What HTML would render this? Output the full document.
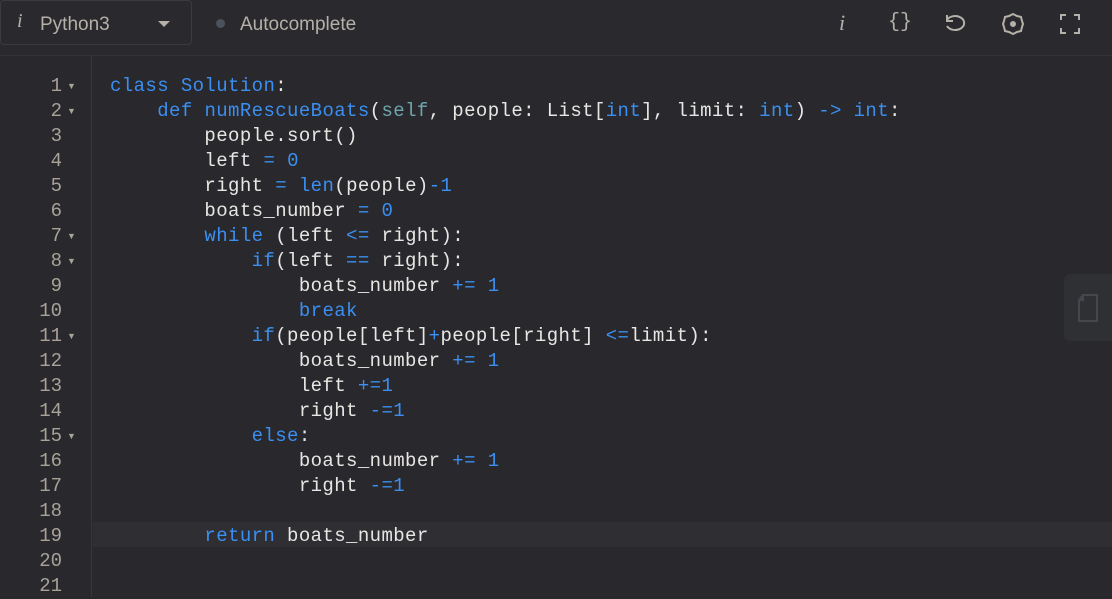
<!DOCTYPE html>
<html><head><style>
body{margin:0;width:1112px;height:597px;background:#28282d;overflow:hidden;font-family:"Liberation Sans",sans-serif;position:relative}
.hdr{position:absolute;left:0;top:0;width:1112px;height:55px;border-bottom:1px solid #323237;background:#29292e}
.sel{position:absolute;left:0;top:0;width:192px;height:45px;border:1px solid #3a3a3f;border-radius:4px;box-sizing:border-box}
.t{position:absolute;color:#b5b0a8;font-size:19px}
.gut{position:absolute;left:0;top:56px;width:91px;height:541px;border-right:1px solid #36363b}
.ln{position:absolute;left:0;width:62px;text-align:right;font-family:"Liberation Mono",monospace;font-size:19px;color:#a8a298;line-height:25px}
.ar{position:absolute;left:67px;font-size:9px;color:#a8a298;line-height:25px}
.code{position:absolute;left:110px;top:74px;font-family:"Liberation Mono",monospace;font-size:19px;letter-spacing:0.4px;line-height:25px;color:#e8e6e3;white-space:pre}
.k{color:#3b8ff0}.s{color:#6fa5ac}
.cur{position:absolute;left:93px;top:522px;width:1019px;height:25px;background:#2e2e33}
</style></head><body>
<div class="hdr">
<div class="sel"></div>
<div class="t" style="left:17px;top:10px;font-family:'Liberation Serif',serif;font-style:italic;font-size:20px">i</div>
<div class="t" style="left:40px;top:14px">Python3</div>
<div style="position:absolute;left:158px;top:21px;border-left:6px solid transparent;border-right:6px solid transparent;border-top:6px solid #b5b0a8"></div>
<div style="position:absolute;left:216px;top:19px;width:9px;height:9px;border-radius:50%;background:#4a525a"></div>
<div class="t" style="left:240px;top:14px">Autocomplete</div>
<div class="t" style="left:839px;top:10px;font-family:'Liberation Serif',serif;font-style:italic;font-size:22px">i</div>
<div class="t" style="left:888px;top:11px;font-family:'Liberation Mono',monospace;font-size:20px">{}</div>
<svg style="position:absolute;left:943px;top:12px" width="26" height="24" viewBox="0 0 26 24" fill="none" stroke="#b5b0a8" stroke-width="2"><path d="M4 8a9 7 0 1 1 0 6"/><path d="M4 9h9" stroke-width="0"/><path d="M4 3v6h6"/></svg>
<svg style="position:absolute;left:1000px;top:11px" width="26" height="26" viewBox="0 0 26 26" fill="none" stroke="#b5b0a8" stroke-width="2"><path d="M13 3l4 2 4 1 1 4 1 3-1 3-1 4-4 1-4 2-4-2-4-1-1-4-1-3 1-3 1-4 4-1z"/><circle cx="13" cy="13" r="2" fill="#b5b0a8"/></svg>
<svg style="position:absolute;left:1060px;top:14px" width="20" height="20" viewBox="0 0 20 20" fill="none" stroke="#b5b0a8" stroke-width="2"><path d="M1 6V1h5M14 1h5v5M19 14v5h-5M6 19H1v-5"/></svg>
</div>
<div class="gut"></div>
<div class="cur"></div>
<div style="position:absolute;left:1064px;top:274px;width:48px;height:67px;background:#2f3034;border-radius:6px 0 0 6px"></div>
<svg style="position:absolute;left:1077px;top:293px" width="24" height="30" viewBox="0 0 24 30" fill="none" stroke="#46474c" stroke-width="2"><path d="M6 2h14v26H2V7z"/><path d="M2 7h4V2" fill="#46474c"/></svg>
<div id="g"></div>
<div class="code"><span class="k">class</span> <span class="k">Solution</span>:
    <span class="k">def</span> <span class="k">numRescueBoats</span>(<span class="s">self</span>, people: List[<span class="k">int</span>], limit: <span class="k">int</span>) <span class="k">-&gt;</span> <span class="k">int</span>:
        people.sort()
        left <span class="k">=</span> <span class="k">0</span>
        right <span class="k">=</span> <span class="k">len</span>(people)<span class="k">-1</span>
        boats_number <span class="k">=</span> <span class="k">0</span>
        <span class="k">while</span> (left <span class="k">&lt;=</span> right):
            <span class="k">if</span>(left <span class="k">==</span> right):
                boats_number <span class="k">+=</span> <span class="k">1</span>
                <span class="k">break</span>
            <span class="k">if</span>(people[left]<span class="k">+</span>people[right] <span class="k">&lt;=</span>limit):
                boats_number <span class="k">+=</span> <span class="k">1</span>
                left <span class="k">+=1</span>
                right <span class="k">-=1</span>
            <span class="k">else</span>:
                boats_number <span class="k">+=</span> <span class="k">1</span>
                right <span class="k">-=1</span>

        <span class="k">return</span> boats_number
</div>
<script>
var f=[1,2,7,8,11,15],h='';
for(var i=1;i<=21;i++){var y=74+(i-1)*25;h+='<div class="ln" style="top:'+y+'px">'+i+'</div>';if(f.indexOf(i)>=0)h+='<div class="ar" style="top:'+y+'px">▼</div>';}
document.getElementById('g').innerHTML=h;
</script>
</body></html>
